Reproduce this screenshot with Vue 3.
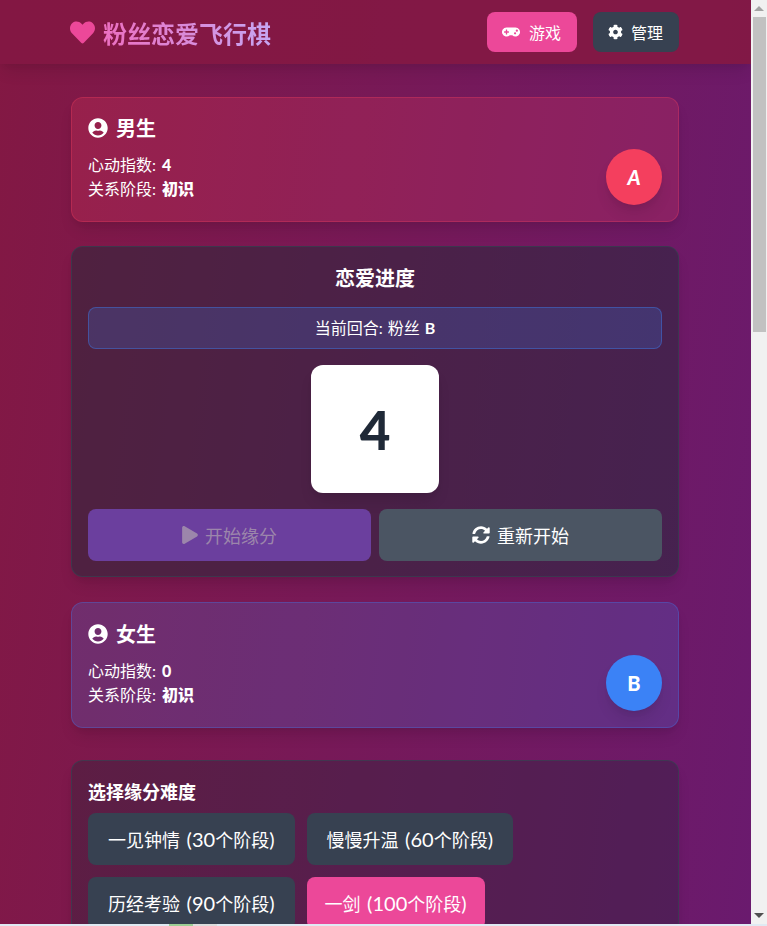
<template>
  <div class="window">
    <div class="viewport">
      <div class="page">
        <header class="topbar">
          <div class="topbar-inner">
            <h1 class="logo">
              <svg class="logo-heart" viewBox="0 0 512 512"><path :d="icons.heart" /></svg>
              <span class="logo-text">粉丝恋爱飞行棋</span>
            </h1>
            <nav class="nav">
              <button class="nav-btn pink">
                <svg class="ico-game" viewBox="0 0 640 512"><path :d="icons.gamepad" /></svg>游戏
              </button>
              <button class="nav-btn slate">
                <svg class="ico" viewBox="0 0 512 512"><path :d="icons.cog" /></svg>管理
              </button>
            </nav>
          </div>
        </header>

        <main class="content">
          <section class="card player male">
            <div>
              <h2 class="player-name">
                <svg class="ico-user" viewBox="0 0 496 512"><path :d="icons.user" /></svg>男生
              </h2>
              <p class="stat first">心动指数: <b>4</b></p>
              <p class="stat">关系阶段: <b>初识</b></p>
            </div>
            <div class="avatar red"><i class="slant">A</i></div>
          </section>

          <section class="card board">
            <h2 class="board-title">恋爱进度</h2>
            <div class="turn">当前回合: 粉丝 <b class="turn-name">B</b></div>
            <div class="dice-wrap">
              <div class="dice">4</div>
            </div>
            <div class="actions">
              <button class="action start">
                <svg class="ico-play" viewBox="0 0 448 512"><path :d="icons.play" /></svg>开始缘分
              </button>
              <button class="action reset">
                <svg class="ico-action" viewBox="0 0 512 512"><path :d="icons.sync" /></svg>重新开始
              </button>
            </div>
          </section>

          <section class="card player female">
            <div>
              <h2 class="player-name">
                <svg class="ico-user" viewBox="0 0 496 512"><path :d="icons.user" /></svg>女生
              </h2>
              <p class="stat first">心动指数: <b>0</b></p>
              <p class="stat">关系阶段: <b>初识</b></p>
            </div>
            <div class="avatar blue">B</div>
          </section>

          <section class="card levels">
            <h3 class="levels-title">选择缘分难度</h3>
            <div class="level-list">
              <button
                v-for="item in levels"
                :key="item.name"
                class="level"
                :class="{ active: item.active }"
              >{{ item.name }} <span class="num">({{ item.steps }}</span>个阶段<span class="num">)</span></button>
            </div>
          </section>
        </main>
      </div>
    </div>

    <div class="scrollbar">
      <span class="arrow up"></span>
      <div class="thumb"></div>
      <div class="track"></div>
      <span class="arrow down"></span>
    </div>

    <div class="strip">
      <span class="strip-green"></span>
      <span class="strip-grey"></span>
    </div>
  </div>
</template>

<script setup>
const levels = [
  { name: '一见钟情', steps: 30 },
  { name: '慢慢升温', steps: 60 },
  { name: '历经考验', steps: 90 },
  { name: '一剑', steps: 100, active: true }
];

const icons = {
  heart: 'M462.3 62.6C407.5 15.9 326 24.3 275.7 76.2L256 96.5l-19.7-20.3C186.1 24.3 104.5 15.9 49.7 62.6c-62.8 53.6-66.1 149.8-9.9 207.9l193.5 199.8c12.5 12.9 32.8 12.9 45.3 0l193.5-199.8c56.3-58.1 53-154.3-9.8-207.9z',
  gamepad: 'M480.07 96H160a160 160 0 1 0 114.24 272h91.52A160 160 0 1 0 480.07 96zM248 268a12 12 0 0 1-12 12h-52v52a12 12 0 0 1-12 12h-24a12 12 0 0 1-12-12v-52H84a12 12 0 0 1-12-12v-24a12 12 0 0 1 12-12h52v-52a12 12 0 0 1 12-12h24a12 12 0 0 1 12 12v52h52a12 12 0 0 1 12 12zm216 76a40 40 0 1 1 40-40 40 40 0 0 1-40 40zm64-96a40 40 0 1 1 40-40 40 40 0 0 1-40 40z',
  cog: 'M487.4 315.7l-42.6-24.6c4.3-23.2 4.3-47 0-70.2l42.6-24.6c4.9-2.8 7.1-8.6 5.5-14-11.1-35.6-30-67.8-54.7-94.6-3.8-4.1-10-5.1-14.8-2.3L380.8 110c-17.9-15.4-38.5-27.3-60.8-35.1V25.8c0-5.6-3.9-10.5-9.4-11.7-36.7-8.2-74.3-7.8-109.2 0-5.5 1.2-9.4 6.1-9.4 11.7V75c-22.2 7.9-42.8 19.8-60.8 35.1L88.7 85.5c-4.9-2.8-11-1.9-14.8 2.3-24.7 26.7-43.6 58.9-54.7 94.6-1.7 5.4.6 11.2 5.5 14L67.3 221c-4.3 23.2-4.3 47 0 70.2l-42.6 24.6c-4.9 2.8-7.1 8.6-5.5 14 11.1 35.6 30 67.8 54.7 94.6 3.8 4.1 10 5.1 14.8 2.3l42.6-24.6c17.9 15.4 38.5 27.3 60.8 35.1v49.2c0 5.6 3.9 10.5 9.4 11.7 36.7 8.2 74.3 7.8 109.2 0 5.5-1.2 9.4-6.1 9.4-11.7v-49.2c22.2-7.9 42.8-19.8 60.8-35.1l42.6 24.6c4.9 2.8 11 1.9 14.8-2.3 24.7-26.7 43.6-58.9 54.7-94.6 1.5-5.5-.7-11.3-5.6-14.1zM256 336c-44.1 0-80-35.9-80-80s35.9-80 80-80 80 35.9 80 80-35.9 80-80 80z',
  user: 'M248 8C111 8 0 119 0 256s111 248 248 248 248-111 248-248S385 8 248 8zm0 96c48.6 0 88 39.4 88 88s-39.4 88-88 88-88-39.4-88-88 39.4-88 88-88zm0 344c-58.7 0-111.3-26.6-146.5-68.2 18.8-35.4 55.6-59.8 98.5-59.8 2.4 0 4.8.4 7.1 1.1 13 4.2 26.6 6.9 40.9 6.9 14.3 0 28-2.7 40.9-6.9 2.3-.7 4.7-1.1 7.1-1.1 42.9 0 79.7 24.4 98.5 59.8C359.3 421.4 306.7 448 248 448z',
  play: 'M424.4 214.7L72.4 6.6C43.8-10.3 0 6.1 0 47.9V464c0 37.5 40.7 60.1 72.4 41.3l352-208c31.4-18.5 31.5-64.1 0-82.6z',
  sync: 'M370.72 133.28C339.458 104.008 298.888 87.962 255.848 88c-77.458.068-144.328 53.178-162.791 126.85-1.344 5.363-6.122 9.15-11.651 9.15H24.103c-7.498 0-13.194-6.807-11.807-14.176C33.933 94.924 134.813 8 256 8c66.448 0 126.791 26.136 171.315 68.685L463.03 40.97C478.149 25.851 504 36.559 504 57.941V192c0 13.255-10.745 24-24 24H345.941c-21.382 0-32.09-25.851-16.971-40.971l41.75-41.749zM32 296h134.059c21.382 0 32.09 25.851 16.971 40.971l-41.75 41.75c31.262 29.273 71.835 45.319 114.876 45.28 77.418-.07 144.315-53.144 162.787-126.849 1.344-5.363 6.122-9.15 11.651-9.15h57.304c7.498 0 13.194 6.807 11.807 14.176C478.067 417.076 377.187 504 256 504c-66.448 0-126.791-26.136-171.315-68.685L48.97 471.03C33.851 486.149 8 475.441 8 454.059V320c0-13.255 10.745-24 24-24z'
};
</script>

<style scoped>
.window {
  display: grid;
  grid-template-columns: 751px 16px;
  grid-template-rows: 924px 2px;
  width: 767px;
  height: 926px;
  overflow: hidden;
  font-family: "Lato", "Noto Sans CJK SC", sans-serif;
  color: #fff;
}

.viewport {
  overflow: hidden;
}

.page {
  height: 924px;
  overflow: hidden;
  background: linear-gradient(97deg, #831843, #6a1a6e);
}

.topbar {
  height: 64px;
  background: rgba(131, 24, 67, 0.92);
  box-shadow: 0 10px 15px -3px rgba(0, 0, 0, 0.1), 0 4px 6px -2px rgba(0, 0, 0, 0.05);
}

.topbar-inner {
  width: 608px;
  height: 64px;
  margin-left: 71px;
  display: flex;
  align-items: center;
  justify-content: space-between;
}

.logo {
  display: flex;
  align-items: center;
  gap: 8px;
  margin: 0;
  font-size: 24px;
  font-weight: 700;
}

.logo-heart {
  width: 25px;
  height: 25px;
  margin-left: -1px;
  fill: #ec4899;
}

.logo-text {
  background: linear-gradient(to right, #ec6fc0, #c6a6f2);
  -webkit-background-clip: text;
  background-clip: text;
  color: transparent;
}

.nav {
  display: flex;
  gap: 16px;
}

.nav-btn {
  display: flex;
  align-items: center;
  height: 40px;
  padding: 0 16px 0 15px;
  border: 0;
  border-radius: 8px;
  color: #fff;
  font: inherit;
  font-size: 16px;
}

.nav-btn.pink {
  background: #ec4899;
}

.nav-btn.slate {
  background: #374151;
}

.ico {
  width: 15px;
  height: 16px;
  margin-right: 8px;
  fill: #fff;
}

.ico-game {
  width: 18px;
  height: 16px;
  margin-right: 9px;
  fill: #fff;
}

.content {
  width: 608px;
  margin-left: 71px;
  padding-top: 33px;
  display: flex;
  flex-direction: column;
}

.card {
  box-sizing: border-box;
  padding: 16px;
  border: 1px solid;
  border-radius: 12px;
  box-shadow: 0 10px 15px -3px rgba(0, 0, 0, 0.1), 0 4px 6px -2px rgba(0, 0, 0, 0.05);
}

.player {
  display: flex;
  justify-content: space-between;
  align-items: flex-end;
}

.male {
  height: 125px;
  background: rgba(244, 63, 94, 0.2);
  border-color: rgba(244, 63, 94, 0.3);
  margin-bottom: 24px;
}

.female {
  height: 126px;
  padding-top: 17px;
  background: rgba(59, 130, 246, 0.2);
  border-color: rgba(59, 130, 246, 0.3);
  margin-bottom: 32px;
}

.player > div:first-child {
  align-self: flex-start;
}

.player-name {
  display: flex;
  align-items: center;
  gap: 8px;
  height: 27px;
  margin: 0;
  font-size: 20px;
  font-weight: 700;
}

.ico-user {
  width: 20px;
  height: 20px;
  fill: #fff;
}

.stat {
  margin: 0;
  font-size: 16px;
  line-height: 24px;
  word-spacing: 2px;
}

.stat b {
  font-weight: 900;
}

.stat.first {
  margin-top: 12px;
}

.avatar {
  width: 56px;
  height: 56px;
  border-radius: 50%;
  display: flex;
  align-items: center;
  justify-content: center;
  font-size: 20px;
  font-weight: 900;
  box-shadow: 0 10px 15px -3px rgba(0, 0, 0, 0.1), 0 4px 6px -2px rgba(0, 0, 0, 0.05);
}

.slant {
  font-style: italic;
}

.red {
  background: #f43f5e;
}

.blue {
  background: #3b82f6;
}

.board {
  height: 331px;
  background: rgba(31, 41, 55, 0.5);
  border-color: rgba(55, 65, 81, 0.7);
  margin-bottom: 25px;
}

.board-title {
  margin: 0 0 14px;
  height: 30px;
  line-height: 30px;
  text-align: center;
  font-size: 20px;
  font-weight: 700;
}

.turn {
  box-sizing: border-box;
  height: 42px;
  line-height: 40px;
  text-align: center;
  font-size: 16px;
  word-spacing: 1px;
  background: rgba(59, 130, 246, 0.2);
  border: 1px solid rgba(59, 130, 246, 0.4);
  border-radius: 8px;
}

.turn-name {
  font-weight: 700;
}

.dice-wrap {
  display: flex;
  justify-content: center;
  margin: 16px 0;
}

.dice {
  width: 128px;
  height: 128px;
  display: flex;
  align-items: center;
  justify-content: center;
  background: #fff;
  border-radius: 12px;
  color: #1f2937;
  font-size: 53px;
  font-weight: 900;
  box-shadow: 0 10px 15px -3px rgba(0, 0, 0, 0.1), 0 4px 6px -2px rgba(0, 0, 0, 0.05);
}

.actions {
  display: grid;
  grid-template-columns: 1fr 1fr;
  gap: 8px;
}

.action {
  display: flex;
  align-items: center;
  justify-content: center;
  height: 52px;
  border: 0;
  border-radius: 8px;
  font: inherit;
  font-size: 18px;
}

.ico-action {
  width: 18px;
  height: 18px;
  margin-right: 7px;
  fill: currentColor;
}

.ico-play {
  width: 16px;
  height: 18px;
  margin-right: 7px;
  fill: currentColor;
}

.start {
  background: #6b3f9e;
  color: #9c86ab;
}

.reset {
  background: #4b5563;
  color: #fff;
}

.levels {
  background: rgba(31, 41, 55, 0.35);
  border-color: rgba(55, 65, 81, 0.7);
}

.levels-title {
  margin: 0 0 8px;
  height: 28px;
  line-height: 30px;
  font-size: 18px;
  font-weight: 700;
}

.level-list {
  display: flex;
  flex-wrap: wrap;
  gap: 12px;
}

.level {
  height: 52px;
  padding: 0 20px;
  border: 0;
  border-radius: 8px;
  background: #374151;
  color: #fff;
  font: inherit;
  font-size: 18px;
  word-spacing: 2px;
}

.level.active {
  padding: 0 18px;
  background: #ec4899;
}

.num {
  font-size: 20px;
}

.scrollbar {
  display: flex;
  flex-direction: column;
  align-items: center;
  background: #f1f1f1;
}

.arrow {
  width: 0;
  height: 0;
  border-left: 5px solid transparent;
  border-right: 5px solid transparent;
}

.arrow.up {
  margin: 6px 0 6px;
  border-bottom: 5px solid #a3a3a3;
}

.arrow.down {
  margin: 6px 0 6px;
  border-top: 5px solid #505050;
}

.thumb {
  width: 13px;
  height: 315px;
  background: #c1c1c1;
}

.track {
  flex: 1;
}

.strip {
  grid-column: 1 / 3;
  display: flex;
  background: #dfeaf3;
}

.strip-green {
  width: 24px;
  margin-left: 169px;
  background: #9ccf94;
}

.strip-grey {
  width: 24px;
  background: #dcdcdc;
}
</style>

<style>
body {
  margin: 0;
  overflow: hidden;
}
</style>
